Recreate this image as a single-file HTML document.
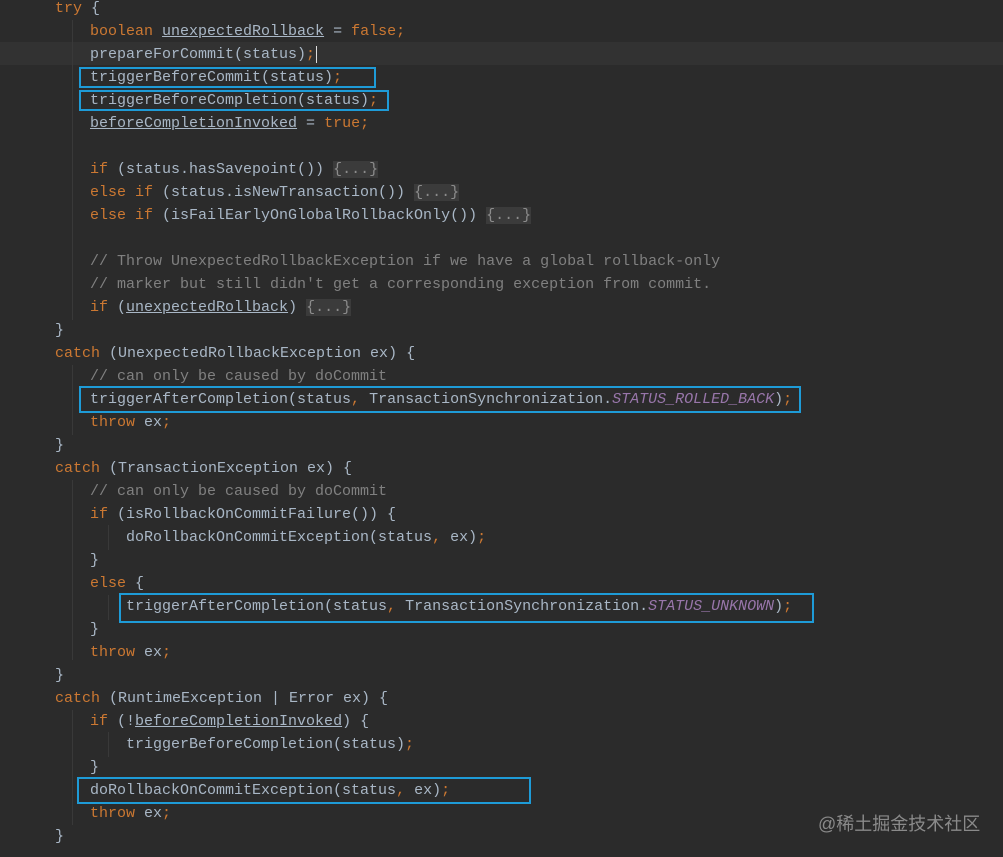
<!DOCTYPE html>
<html><head><meta charset="utf-8"><style>
body{margin:0;width:1003px;height:857px;background:#2b2b2b;overflow:hidden;position:relative;font-family:"Liberation Mono",monospace;font-size:15px;color:#a9b7c6}
.w{position:absolute;left:0;top:0px;width:1003px;height:857px}
.l{position:absolute;height:23px;line-height:23px;white-space:pre}
.k{color:#cc7832}.c{color:#808080}.p{color:#9876aa;font-style:italic}.u{text-decoration:underline}
.f{background:#3b3b3b;color:#8c8c8c}
.b{position:absolute;border:2px solid #1e9bd7;box-sizing:border-box}
.g{position:absolute;width:1px;background:#393939}
.wm{position:absolute;left:818px;top:810px;font-family:"Liberation Sans","Noto Sans CJK SC",sans-serif;font-size:18px;color:#8a8a8a}
</style></head><body>
<div style="position:absolute;left:0;top:42px;width:1003px;height:23px;background:#323232"></div>
<div class="g" style="left:72px;top:20px;height:300px"></div>
<div class="g" style="left:72px;top:365px;height:70px"></div>
<div class="g" style="left:72px;top:480px;height:180px"></div>
<div class="g" style="left:72px;top:710px;height:115px"></div>
<div class="g" style="left:108px;top:525px;height:25px"></div>
<div class="g" style="left:108px;top:595px;height:25px"></div>
<div class="g" style="left:108px;top:732px;height:25px"></div>
<div class="w">
<div class="l" style="left:55px;top:-3px"><span class="k">try</span> {</div>
<div class="l" style="left:90px;top:20px"><span class="k">boolean</span> <span class="u">unexpectedRollback</span> = <span class="k">false;</span></div>
<div class="l" style="left:90px;top:43px">prepareForCommit(status)<span class="k">;</span><span style="border-left:1.5px solid #ddd;margin-left:1px"></span></div>
<div class="l" style="left:90px;top:66px">triggerBeforeCommit(status)<span class="k">;</span></div>
<div class="l" style="left:90px;top:89px">triggerBeforeCompletion(status)<span class="k">;</span></div>
<div class="l" style="left:90px;top:112px"><span class="u">beforeCompletionInvoked</span> = <span class="k">true;</span></div>
<div class="l" style="left:90px;top:158px"><span class="k">if</span> (status.hasSavepoint()) <span class="f">{...}</span></div>
<div class="l" style="left:90px;top:181px"><span class="k">else if</span> (status.isNewTransaction()) <span class="f">{...}</span></div>
<div class="l" style="left:90px;top:204px"><span class="k">else if</span> (isFailEarlyOnGlobalRollbackOnly()) <span class="f">{...}</span></div>
<div class="l c" style="left:90px;top:250px">// Throw UnexpectedRollbackException if we have a global rollback-only</div>
<div class="l c" style="left:90px;top:273px">// marker but still didn't get a corresponding exception from commit.</div>
<div class="l" style="left:90px;top:296px"><span class="k">if</span> (<span class="u">unexpectedRollback</span>) <span class="f">{...}</span></div>
<div class="l" style="left:55px;top:319px">}</div>
<div class="l" style="left:55px;top:342px"><span class="k">catch</span> (UnexpectedRollbackException ex) {</div>
<div class="l c" style="left:90px;top:365px">// can only be caused by doCommit</div>
<div class="l" style="left:90px;top:388px">triggerAfterCompletion(status<span class="k">,</span> TransactionSynchronization.<span class="p">STATUS_ROLLED_BACK</span>)<span class="k">;</span></div>
<div class="l" style="left:90px;top:411px"><span class="k">throw</span> ex<span class="k">;</span></div>
<div class="l" style="left:55px;top:434px">}</div>
<div class="l" style="left:55px;top:457px"><span class="k">catch</span> (TransactionException ex) {</div>
<div class="l c" style="left:90px;top:480px">// can only be caused by doCommit</div>
<div class="l" style="left:90px;top:503px"><span class="k">if</span> (isRollbackOnCommitFailure()) {</div>
<div class="l" style="left:126px;top:526px">doRollbackOnCommitException(status<span class="k">,</span> ex)<span class="k">;</span></div>
<div class="l" style="left:90px;top:549px">}</div>
<div class="l" style="left:90px;top:572px"><span class="k">else</span> {</div>
<div class="l" style="left:126px;top:595px">triggerAfterCompletion(status<span class="k">,</span> TransactionSynchronization.<span class="p">STATUS_UNKNOWN</span>)<span class="k">;</span></div>
<div class="l" style="left:90px;top:618px">}</div>
<div class="l" style="left:90px;top:641px"><span class="k">throw</span> ex<span class="k">;</span></div>
<div class="l" style="left:55px;top:664px">}</div>
<div class="l" style="left:55px;top:687px"><span class="k">catch</span> (RuntimeException | Error ex) {</div>
<div class="l" style="left:90px;top:710px"><span class="k">if</span> (!<span class="u">beforeCompletionInvoked</span>) {</div>
<div class="l" style="left:126px;top:733px">triggerBeforeCompletion(status)<span class="k">;</span></div>
<div class="l" style="left:90px;top:756px">}</div>
<div class="l" style="left:90px;top:779px">doRollbackOnCommitException(status<span class="k">,</span> ex)<span class="k">;</span></div>
<div class="l" style="left:90px;top:802px"><span class="k">throw</span> ex<span class="k">;</span></div>
<div class="l" style="left:55px;top:825px">}</div>
</div>
<div class="b" style="left:79px;top:67px;width:297px;height:21px"></div>
<div class="b" style="left:79px;top:90px;width:310px;height:21px"></div>
<div class="b" style="left:79px;top:386px;width:722px;height:27px"></div>
<div class="b" style="left:119px;top:593px;width:695px;height:30px"></div>
<div class="b" style="left:77px;top:777px;width:454px;height:27px"></div>
<div class="wm">@稀土掘金技术社区</div>
</body></html>
